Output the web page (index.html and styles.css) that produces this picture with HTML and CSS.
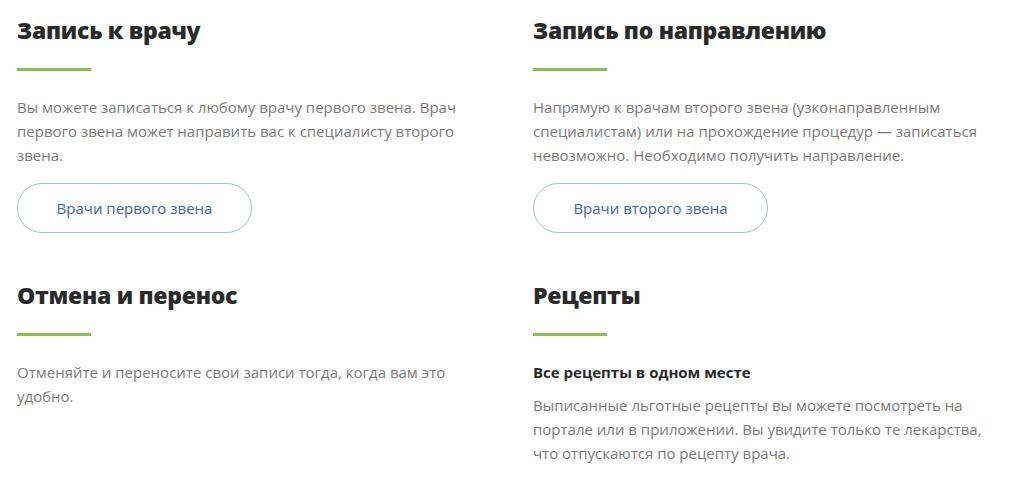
FILE: index.html
```html
<!DOCTYPE html>
<html lang="ru">
<head>
    <meta charset="UTF-8">
    <meta name="viewport" content="width=device-width, initial-scale=1.0">
    <title>Запись</title>
    <link rel="stylesheet" href="styles.css">
</head>
<body>
    <section class="services">
        <div class="card">
            <h2 class="card-title">Запись к врачу</h2>
            <div class="line"></div>
            <p class="card-text">Вы можете записаться к любому врачу первого звена. Врач первого звена может направить вас к специалисту второго звена.</p>
            <a class="btn" href="#">Врачи первого звена</a>
        </div>
        <div class="card">
            <h2 class="card-title">Запись по направлению</h2>
            <div class="line"></div>
            <p class="card-text">Напрямую к врачам второго звена (узконаправленным специалистам) или на прохождение процедур — записаться невозможно. Необходимо получить направление.</p>
            <a class="btn" href="#">Врачи второго звена</a>
        </div>
        <div class="card">
            <h2 class="card-title">Отмена и перенос</h2>
            <div class="line"></div>
            <p class="card-text">Отменяйте и переносите свои записи тогда, когда вам это удобно.</p>
        </div>
        <div class="card">
            <h2 class="card-title">Рецепты</h2>
            <div class="line"></div>
            <h3 class="card-sub">Все рецепты в одном месте</h3>
            <p class="card-text card-text--after-sub">Выписанные льготные рецепты вы можете посмотреть на портале или в приложении. Вы увидите только те лекарства, что отпускаются по рецепту врача.</p>
        </div>
    </section>
</body>
</html>
```

FILE: styles.css
```css
html, body {
    margin: 0;
    padding: 0;
    background: #fff;
    font-family: "Open Sans", "Noto Sans", sans-serif;
}

.services {
    display: grid;
    grid-template-columns: 516px 460px;
    row-gap: 47px;
    padding: 15px 0 0 17px;
}

.card-title {
    margin: 0;
    font-size: 23px;
    line-height: 30px;
    font-weight: 800;
    color: #2a2a2a;
    letter-spacing: -0.3px;
}

.line {
    width: 74px;
    height: 3px;
    margin-top: 23px;
    background: #8dc14f;
}

.card-text {
    margin: 24px 0 0;
    max-width: 450px;
    font-size: 15px;
    line-height: 24px;
    color: #7b7b7b;
}

.card-sub {
    margin: 24px 0 0;
    font-size: 15px;
    line-height: 24px;
    font-weight: 700;
    color: #2a2a2a;
}

.card-text--after-sub {
    margin-top: 9px;
}

.btn {
    display: flex;
    justify-content: center;
    align-items: center;
    box-sizing: border-box;
    width: 235px;
    height: 50px;
    margin-top: 16px;
    border: 1px solid #a9bbd5;
    border-radius: 25px;
    font-size: 15px;
    color: #3b68a6;
    text-decoration: none;
}
```
